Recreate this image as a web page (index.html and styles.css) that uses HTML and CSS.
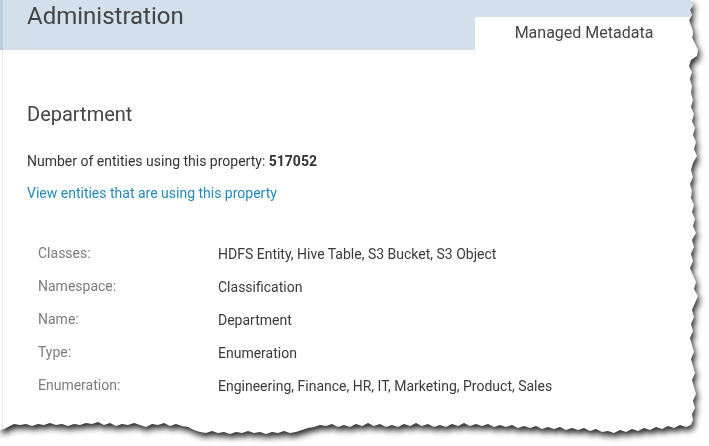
FILE: index.html
```html
<!DOCTYPE html>
<html>
<head>
<meta charset="utf-8">
<link rel="stylesheet" href="styles.css">
</head>
<body>
<div class="sheet">
  <div class="page">
    <header class="topbar">
      <h1 class="title">Administration</h1>
      <div class="tab">Managed Metadata</div>
    </header>
    <main class="content">
      <h2 class="heading">Department</h2>
      <p class="count">Number of entities using this property: <b>517052</b></p>
      <a class="link" href="#">View entities that are using this property</a>
      <dl class="props">
        <dt>Classes:</dt><dd>HDFS Entity, Hive Table, S3 Bucket, S3 Object</dd>
        <dt>Namespace:</dt><dd>Classification</dd>
        <dt>Name:</dt><dd>Department</dd>
        <dt>Type:</dt><dd>Enumeration</dd>
        <dt>Enumeration:</dt><dd>Engineering, Finance, HR, IT, Marketing, Product, Sales</dd>
      </dl>
    </main>
  </div>
</div>
</body>
</html>
```
FILE: styles.css
```css
html, body {
  margin: 0;
  padding: 0;
  background: #ffffff;
}
body {
  font-family: Roboto, "Liberation Sans", sans-serif;
  width: 709px;
  height: 446px;
  overflow: hidden;
}
.sheet {
  width: 709px;
  height: 446px;
  filter: drop-shadow(2px 4px 3px rgba(0, 0, 0, 0.85));
}
.page {
  width: 709px;
  height: 446px;
  background: #ffffff;
  display: flex;
  flex-direction: column;
  -webkit-clip-path: path("M690 0 L693 5 L690 10 L692 15 L689 20 L691 26 L693 32 L692 38 L695 44 L698 50 L697 56 L691 60 L689 66 L692 72 L690 79 L692 86 L691 93 L693 100 L691 107 L694 114 L692 121 L695 128 L693 135 L696 142 L694 149 L697 156 L693 163 L691 170 L693 177 L690 184 L692 191 L691 198 L694 205 L692 212 L695 219 L693 226 L696 233 L692 240 L694 247 L691 254 L693 261 L690 268 L693 275 L696 282 L694 289 L698 296 L695 303 L692 310 L694 317 L691 324 L693 331 L690 338 L692 345 L694 352 L691 359 L693 366 L695 373 L692 380 L694 387 L696 394 L693 401 L695 408 L692 414 L693 420 L691 425 L686 427 L680 425 L674 428 L668 426 L662 429 L656 427 L650 430 L644 428 L638 431 L632 429 L626 432 L620 430 L614 433 L608 431 L602 432 L596 429 L590 431 L584 428 L578 430 L572 428 L566 430 L560 427 L554 429 L548 427 L542 429 L536 426 L530 428 L524 426 L518 428 L512 425 L506 427 L500 425 L494 427 L488 424 L482 426 L476 424 L470 426 L464 423 L458 426 L452 424 L446 427 L440 425 L434 427 L428 424 L422 426 L416 423 L410 426 L404 424 L398 427 L392 425 L386 427 L380 424 L374 426 L368 423 L362 426 L356 424 L350 427 L344 425 L338 427 L332 424 L326 426 L320 425 L314 427 L308 428 L302 430 L296 432 L290 433 L284 431 L278 433 L272 432 L266 434 L260 432 L254 433 L248 431 L242 433 L236 432 L230 434 L224 432 L218 433 L212 431 L206 433 L200 432 L194 430 L188 427 L182 426 L176 424 L170 426 L164 423 L158 425 L152 424 L146 427 L140 425 L134 423 L128 425 L122 424 L116 426 L110 423 L104 425 L98 422 L92 424 L86 423 L80 425 L74 424 L68 426 L62 424 L56 425 L50 423 L44 425 L38 424 L32 426 L26 424 L20 425 L14 424 L8 427 L4 429 L0 430 L0 0 Z");
  clip-path: path("M690 0 L693 5 L690 10 L692 15 L689 20 L691 26 L693 32 L692 38 L695 44 L698 50 L697 56 L691 60 L689 66 L692 72 L690 79 L692 86 L691 93 L693 100 L691 107 L694 114 L692 121 L695 128 L693 135 L696 142 L694 149 L697 156 L693 163 L691 170 L693 177 L690 184 L692 191 L691 198 L694 205 L692 212 L695 219 L693 226 L696 233 L692 240 L694 247 L691 254 L693 261 L690 268 L693 275 L696 282 L694 289 L698 296 L695 303 L692 310 L694 317 L691 324 L693 331 L690 338 L692 345 L694 352 L691 359 L693 366 L695 373 L692 380 L694 387 L696 394 L693 401 L695 408 L692 414 L693 420 L691 425 L686 427 L680 425 L674 428 L668 426 L662 429 L656 427 L650 430 L644 428 L638 431 L632 429 L626 432 L620 430 L614 433 L608 431 L602 432 L596 429 L590 431 L584 428 L578 430 L572 428 L566 430 L560 427 L554 429 L548 427 L542 429 L536 426 L530 428 L524 426 L518 428 L512 425 L506 427 L500 425 L494 427 L488 424 L482 426 L476 424 L470 426 L464 423 L458 426 L452 424 L446 427 L440 425 L434 427 L428 424 L422 426 L416 423 L410 426 L404 424 L398 427 L392 425 L386 427 L380 424 L374 426 L368 423 L362 426 L356 424 L350 427 L344 425 L338 427 L332 424 L326 426 L320 425 L314 427 L308 428 L302 430 L296 432 L290 433 L284 431 L278 433 L272 432 L266 434 L260 432 L254 433 L248 431 L242 433 L236 432 L230 434 L224 432 L218 433 L212 431 L206 433 L200 432 L194 430 L188 427 L182 426 L176 424 L170 426 L164 423 L158 425 L152 424 L146 427 L140 425 L134 423 L128 425 L122 424 L116 426 L110 423 L104 425 L98 422 L92 424 L86 423 L80 425 L74 424 L68 426 L62 424 L56 425 L50 423 L44 425 L38 424 L32 426 L26 424 L20 425 L14 424 L8 427 L4 429 L0 430 L0 0 Z");
}
.topbar {
  height: 50px;
  flex: 0 0 50px;
  box-sizing: border-box;
  background: #d3dfea;
  border-left: 3px solid #bccfe1;
  display: flex;
  align-items: flex-start;
  padding-left: 24px;
}
.title {
  margin: 0;
  padding-top: 2px;
  font-size: 24px;
  line-height: 28px;
  font-weight: 400;
  color: #444444;
}
.tab {
  margin-left: auto;
  align-self: flex-end;
  width: 234px;
  height: 33px;
  box-sizing: border-box;
  background: #ffffff;
  padding: 6px 16px 0 0;
  text-align: center;
  font-size: 16px;
  line-height: 19px;
  color: #444444;
}
.content {
  flex: 1;
  margin-left: 2px;
  border-left: 1px solid #e4e4e4;
  padding: 52px 0 0 24px;
  display: flex;
  flex-direction: column;
  align-items: flex-start;
}
.heading {
  margin: 0;
  font-size: 20px;
  line-height: 24px;
  font-weight: 400;
  color: #444444;
}
.count {
  margin: 25px 0 0 0;
  font-size: 14px;
  line-height: 20px;
  color: #333333;
}
.count b {
  font-weight: 700;
}
.link {
  margin-top: 12px;
  font-size: 14px;
  line-height: 20px;
  color: #2289b8;
  text-decoration: none;
}
.props {
  margin: 40px 0 0 11px;
  display: grid;
  grid-template-columns: 180px auto;
  grid-auto-rows: 33px;
  font-size: 14px;
}
.props dt {
  line-height: 20px;
  color: #7b7b7b;
}
.props dd {
  margin: 0;
  line-height: 23px;
  color: #3a3a3a;
}
```
